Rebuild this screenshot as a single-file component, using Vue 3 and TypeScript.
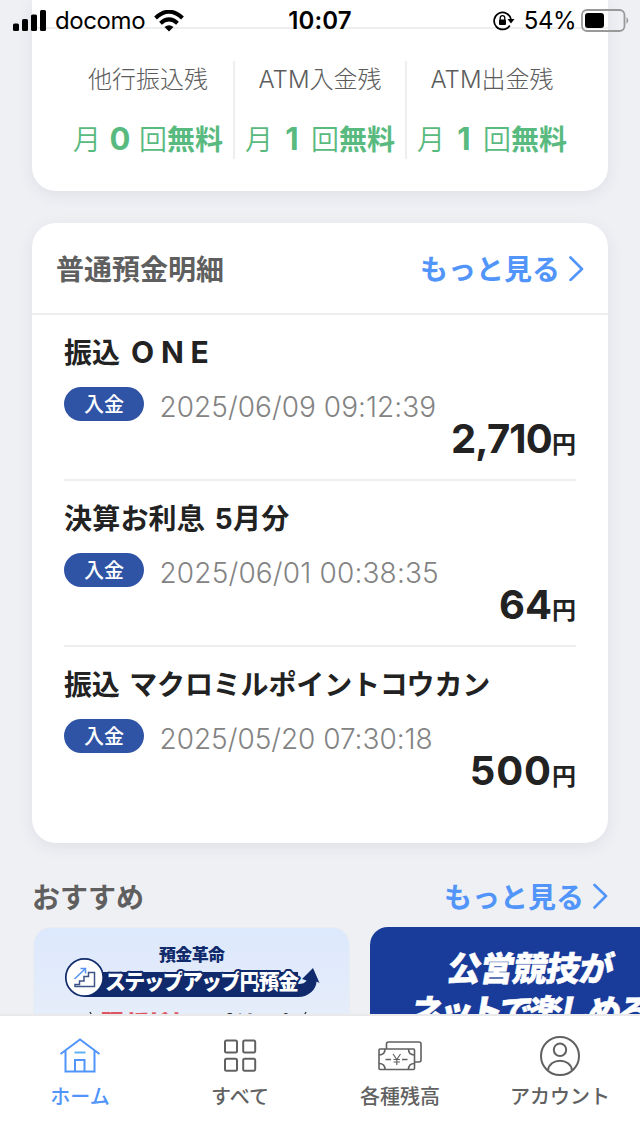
<script setup lang="ts">
interface Quota { label: string; count: string }
interface Transaction { title: string; latin?: string; date: string; amount: string; titleSpacing: string; dateSpacing: string; amountSpacing: string }

const quotas: Quota[] = [
  { label: '他行振込残', count: '0' },
  { label: 'ATM入金残', count: '1' },
  { label: 'ATM出金残', count: '1' },
]

const transactions: Transaction[] = [
  { title: '振込', latin: 'ONE', date: '2025/06/09 09:12:39', amount: '2,710', titleSpacing: '0px', dateSpacing: '0.04px', amountSpacing: '-0.8px' },
  { title: '決算お利息 5月分', date: '2025/06/01 00:38:35', amount: '64', titleSpacing: '0.2px', dateSpacing: '0.17px', amountSpacing: '0px' },
  { title: '振込 マクロミルポイントコウカン', date: '2025/05/20 07:30:18', amount: '500', titleSpacing: '-0.15px', dateSpacing: '-0.03px', amountSpacing: '0.9px' },
]
</script>

<template>
  <div class="phone">
    <main class="content">
      <section class="card quota-card">
        <div class="quota-top"></div>
        <div class="quota-grid">
          <div v-for="q in quotas" :key="q.label" class="quota">
            <div class="quota-label">{{ q.label }}</div>
            <div class="quota-value"><span>月</span><b class="count">{{ q.count }}</b><span>回</span><b>無料</b></div>
          </div>
        </div>
      </section>

      <section class="card detail-card">
        <header class="detail-head">
          <h2>普通預金明細</h2>
          <a class="more">もっと見る<svg width="16" height="26" viewBox="0 0 16 26"><path d="M2.500 2.500 L14 14 L2.500 25" /></svg></a>
        </header>
        <ul class="list">
          <li v-for="t in transactions" :key="t.date" class="item">
            <div class="item-title" :style="{ letterSpacing: t.titleSpacing }">{{ t.title }}<span v-if="t.latin" class="wide">{{ t.latin }}</span></div>
            <div class="item-meta"><span class="badge">入金</span><span class="date" :style="{ letterSpacing: t.dateSpacing }">{{ t.date }}</span></div>
            <div class="amount"><span class="num" :style="{ letterSpacing: t.amountSpacing }">{{ t.amount }}</span><span class="yen">円</span></div>
          </li>
        </ul>
      </section>

      <header class="rec-head">
        <h2>おすすめ</h2>
        <a class="more">もっと見る<svg width="16" height="26" viewBox="0 0 16 26"><path d="M2.500 2 L14 13 L2.500 24.500" /></svg></a>
      </header>
      <div class="banners">
        <div class="banner light">
          <svg width="315" height="100" viewBox="34 928 315 100">
            <text x="159" y="960.500" textLength="66" class="kakumei">預金革命</text>
            <path d="M84 997 H298 C309 997 316.500 989 316.500 981.500 L319.500 983 L313 968 L302 979 L306.500 980.500 C304.500 984 300 984 298 984 V972 H100 V974 H84 Z" fill="#102a6b" />
            <text x="105" y="988.500" textLength="194" class="stepup">ステップアップ円預金</text>
            <circle cx="84.500" cy="977.500" r="18.700" fill="#fff" stroke="#102a6b" stroke-width="1.700" />
            <path d="M75 986.500 H94.500 V972.500 H88.500 V976.500 H84 V981 H79.500 V984.500 H75 Z" fill="none" stroke="#3c5487" stroke-width="1.500" />
            <path d="M74.500 979 L85 969 M80.500 968.500 H85.500 V973.500" fill="none" stroke="#5794f2" stroke-width="1.500" />
            <text x="101" y="1030.400" textLength="82" class="teaser red">預けるだけ</text>
            <text x="207" y="1031.500" textLength="82" class="teaser">で金利アップ</text>
            <path d="M90 1012 l3 6 M306 1012 l-3 6" stroke="#333" stroke-width="1.300" />
          </svg>
        </div>
        <div class="banner blue">
          <svg width="270" height="100" viewBox="370 927 270 100">
            <g transform="translate(445.500 981) skewX(-10)"><text x="0" y="0" textLength="166">公営競技が</text></g>
            <g transform="translate(408 1024) skewX(-10)"><text x="0" y="0" textLength="241">ネットで楽しめる</text></g>
          </svg>
        </div>
      </div>
    </main>

    <nav class="tabs">
      <a class="tab active">
        <svg width="48" height="44" viewBox="0 0 48 44"><path d="M4.500 20 L24 5.500 L43.500 20 M9.500 17 V37.500 H38.500 V17 M19 37 V26 H28.500 V37" /><path d="M18.500 18.500 H29.500" class="sky" /></svg>
        <span>ホーム</span>
      </a>
      <a class="tab">
        <svg width="48" height="44" viewBox="0 0 48 44"><g><rect x="9" y="6.500" width="12" height="12" rx="1.500" /><rect x="27.200" y="6.500" width="12" height="12" rx="1.500" /><rect x="9" y="24.700" width="12" height="12" rx="1.500" /><rect x="27.200" y="24.700" width="12" height="12" rx="1.500" /></g></svg>
        <span>すべて</span>
      </a>
      <a class="tab">
        <svg width="48" height="44" viewBox="0 0 48 44" class="thin"><path d="M10.500 15 V10 Q10.500 8 12.500 8 H43 Q45 8 45 10 V26 Q45 28 43 28 H39" /><rect x="3" y="15" width="35.500" height="20.500" rx="1" /><path d="M9 15 Q9 21 3 21 M32.500 15 Q32.500 21 38.500 21 M3 29.500 Q9 29.500 9 35.500 M38.500 29.500 Q32.500 29.500 32.500 35.500 M9.500 25.500 H15 M26 25.500 H31.500" /><path d="M17 20 L20.800 25.500 L24.500 20 M20.800 25.500 V31 M17.500 25.500 H24 M17.500 28 H24" stroke-width="1.200" /></svg>
        <span>各種残高</span>
      </a>
      <a class="tab">
        <svg width="48" height="44" viewBox="0 0 48 44"><circle cx="24" cy="22" r="19" /><circle cx="24" cy="15.800" r="6.200" /><path d="M12 36 C14 23.500 34 23.500 36 36" /></svg>
        <span>アカウント</span>
      </a>
    </nav>

    <div class="status">
      <div class="status-left">
        <svg width="34" height="22" viewBox="0 0 34 22"><rect x="0" y="13.500" width="6" height="7.500" rx="1.500" /><rect x="9" y="9" width="6" height="12" rx="1.500" /><rect x="18" y="4.500" width="6" height="16.500" rx="1.500" /><rect x="27" y="0" width="6" height="21" rx="1.500" /></svg>
        <span class="carrier">docomo</span>
        <svg width="30" height="22" viewBox="0 0 30 22" class="wifi"><path d="M1.500 8 Q15 -4.500 28.500 8" /><path d="M6.500 13.200 Q15 5.500 23.500 13.200" /><path d="M10.500 17 Q15 13.500 19.500 17 L15 21.500 Z" class="dot" /></svg>
      </div>
      <div class="time">10:07</div>
      <div class="status-right">
        <svg width="22" height="20" viewBox="0 0 22 20"><path d="M16.800 14.500 A8.500 8.500 0 1 1 18 8.500" fill="none" stroke="#000" stroke-width="1.700" /><path d="M14.500 8 H21.500 L18 12.500 Z" /><rect x="6" y="8.500" width="7" height="5.500" rx="1" /><path d="M7.200 9 V7 A2.300 2.300 0 0 1 11.800 7 V9" fill="none" stroke="#000" stroke-width="1.300" /></svg>
        <span class="percent">54%</span>
        <svg width="48" height="24" viewBox="0 0 48 24"><rect x="1" y="1" width="42.500" height="21" rx="5" fill="none" stroke="#999" stroke-width="1.800" /><rect x="4" y="4" width="19" height="15" rx="3" /><path d="M45.500 8 Q49 11.500 45.500 15 Z" fill="#999" /></svg>
      </div>
    </div>
  </div>
</template>

<style>
body { margin: 0; }
</style>

<style scoped>
.phone { position: relative; width: 640px; height: 1136px; overflow: hidden; background: #eff0f4; display: flex; flex-direction: column; font-family: "Noto Sans CJK JP", sans-serif; color: #222; }
.content { height: 1014px; overflow: hidden; flex: none; }
.card { width: 576px; margin: 0 auto; background: #fff; box-shadow: 0 4px 16px rgba(40, 50, 80, .08); box-sizing: border-box; }
h2 { margin: 0; font-size: 28px; line-height: 40px; font-weight: 700; color: #5f5f5f; }
.quota-card { height: 191px; border-radius: 0 0 24px 24px; }
.quota-top { height: 27px; border-bottom: 2px solid #eee; }
.quota-grid { display: grid; grid-template-columns: 172px 172px 172px; padding: 32px 29px 0; }
.quota { height: 98px; box-sizing: border-box; text-align: center; white-space: nowrap; border-left: 2px solid #eee; }
.quota:first-child { border-left-color: transparent; }
.quota-label { font-family: Inter, "Noto Sans CJK JP", sans-serif; font-size: 24px; line-height: 32px; padding-top: 3px; font-weight: 300; color: #5c5c5c; }
.quota-value { display: flex; justify-content: center; align-items: baseline; margin-top: 22px; font-size: 28px; line-height: 40px; font-weight: 350; color: #59ba80; }
.quota-value b { font-weight: 700; }
.quota-value .count { font-family: Inter, sans-serif; width: 38px; text-align: center; font-size: 31px; line-height: 40px; }
.detail-card { height: 620px; margin-top: 32px; border-radius: 24px; }
.detail-head { height: 90px; border-bottom: 2px solid #eee; display: flex; align-items: center; justify-content: space-between; padding: 0 24px; }
.more { display: flex; align-items: center; gap: 8px; font-size: 28px; line-height: 40px; font-weight: 700; color: #5195fa; }
.more svg path { fill: none; stroke: #5195fa; stroke-width: 2.6; stroke-linecap: round; stroke-linejoin: round; }
.list { list-style: none; margin: 0; padding: 0 32px; }
.item { height: 166px; box-sizing: border-box; padding-top: 18px; border-bottom: 2px solid #eee; }
.item:last-child { border-bottom: 0; }
.item-title { font-family: Inter, "Noto Sans CJK JP", sans-serif; font-size: 28px; line-height: 40px; height: 40px; font-weight: 700; white-space: pre; word-spacing: 3px; }
.wide { letter-spacing: 6.8px; margin-left: 11px; font-size: 30px; line-height: 30px; }
.item-meta { display: flex; align-items: center; height: 34px; margin-top: 14px; }
.badge { width: 80px; height: 34px; border-radius: 17px; background: #3054a5; color: #fff; font-size: 20px; line-height: 33px; text-align: center; font-weight: 500; }
.date { margin-left: 15.5px; font-family: Inter, sans-serif; font-weight: 300; font-size: 28px; line-height: 34px; color: #838383; padding-top: 6px; white-space: pre; }
.amount { display: flex; justify-content: flex-end; align-items: baseline; height: 40px; line-height: 40px; margin-top: -2px; }
.num { font-family: Inter, sans-serif; font-weight: 700; font-size: 40px; }
.yen { font-size: 24px; font-weight: 700; line-height: 40px; }
.rec-head { display: flex; align-items: center; justify-content: space-between; height: 40px; margin: 33px 32px 0; }
.banners { display: flex; gap: 20px; margin-top: 11px; padding-left: 33px; }
.banner { flex: none; height: 180px; border-radius: 18px; overflow: hidden; box-sizing: border-box; }
.banner svg { display: block; }
.light { width: 317px; border: 1px solid #e9edf2; background: linear-gradient(#dce8fc, #e6edfa 50%); }
.blue { width: 320px; background: #193b9a; }
.banner text { font-family: "Noto Sans CJK JP", sans-serif; font-weight: 900; }
.kakumei { font-size: 17px; fill: #102a6b; }
.stepup { font-size: 21px; fill: #fff; stroke: #102a6b; stroke-width: 4px; stroke-linejoin: round; paint-order: stroke; }
.teaser { font-size: 22px; fill: #333; }
.teaser.red { fill: #dd5560; }
.blue text { font-size: 34px; fill: #fff; stroke: #fff; stroke-width: .5px; }
.tabs { box-sizing: border-box; height: 122px; border-top: 2px solid #e9e9e9; background: #fff; display: grid; grid-template-columns: repeat(4, 160px); flex: none; }
.tab { display: flex; flex-direction: column; align-items: center; padding-top: 18px; color: #616161; font-size: 20px; line-height: 28px; font-weight: 500; }
.tab span { margin-top: 4px; }
.tab svg { fill: none; stroke: currentColor; stroke-width: 2; }
.tab .thin { stroke-width: 1.6; }
.active { color: #5195fa; }
.tab svg .sky { stroke: #61b1ee; }
.status { position: absolute; left: 0; top: 0; width: 640px; height: 40px; display: grid; grid-template-columns: 1fr auto 1fr; align-items: center; font-family: Inter, sans-serif; font-size: 24px; line-height: 40px; color: #000; }
.status-left { display: flex; align-items: center; padding-left: 13px; }
.carrier { margin: 1px 9px 0 8px; letter-spacing: -.4px; }
.wifi path { fill: none; stroke: #000; stroke-width: 4; }
.wifi .dot { fill: #000; stroke: none; }
.time { font-weight: 600; padding-top: 1px; letter-spacing: .1px; }
.status-right { display: flex; align-items: center; justify-content: flex-end; padding-right: 11px; }
.percent { margin: 1px 5px 0 9px; letter-spacing: -.5px; }
</style>
